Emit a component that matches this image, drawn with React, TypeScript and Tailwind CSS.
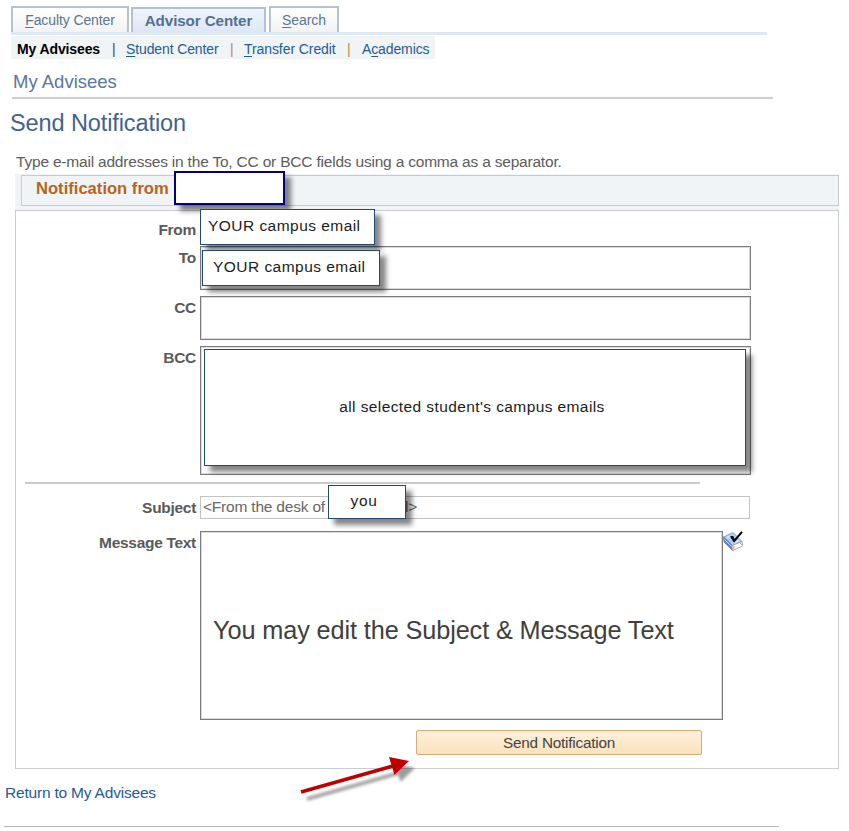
import type { ReactNode } from "react"
import clsx from "clsx"

function Callout({ className, children }: { className?: string; children?: ReactNode }) {
  return (
    <div
      className={clsx(
        "absolute z-10 flex items-center whitespace-nowrap bg-white text-[15.5px] text-[#1c1c1c] shadow-[6px_6px_5px_rgba(0,0,0,0.48)]",
        className
      )}
    >
      {children}
    </div>
  )
}

function FieldRow({ label, className, children }: { label: string; className?: string; children?: ReactNode }) {
  return (
    <div className={clsx("relative flex items-start", className)}>
      <div className="mr-1 w-[180px] shrink-0 pt-[3px] text-right text-[15.5px] leading-[18px] font-bold tracking-[-0.3px] text-[#5a5a5a]">
        {label}
      </div>
      {children}
    </div>
  )
}

function TextArea({ className, children }: { className?: string; children?: ReactNode }) {
  return (
    <div className={clsx("border border-[#7b7b7b] shadow-[inset_0_0_0_1px_#dcdcdc]", className)}>
      {children}
    </div>
  )
}

function Key({ children }: { children: ReactNode }) {
  return <span className="underline underline-offset-2">{children}</span>
}

function SpellCheckIcon() {
  return (
    <svg className="h-[21px] w-[21px] shrink-0" viewBox="0 0 21 21">
      <path d="M0.5 6 L10 1.5 L19 10.500 L9.500 14.500 Z" fill="#a4d0f5" stroke="#7d93a8" strokeWidth="0.8" />
      <path d="M4 7 L7 5 M11 12 L16 9.500" stroke="#d6ecfc" strokeWidth="1.4" />
      <path d="M0.500 6 L9.500 14.500 V19.500 L1 11 Z" fill="#5f84c8" stroke="#74808f" strokeWidth="0.8" />
      <path d="M1.500 8.500 L9 15.800" stroke="#e6eefc" strokeWidth="0.8" />
      <path d="M9.500 14.500 L19 10.500 L19.500 15 L10 19.500 Z" fill="#fff" stroke="#9a9a9a" strokeWidth="0.8" />
      <path d="M9 15 L11.500 14.200 V18.300 L9.500 19.500 Z" fill="#f3b5b0" />
      <path d="M17 12 L20 14.500" stroke="#8aa9cf" strokeWidth="1" />
      <path d="M8.500 5.500 L11.200 10 L19 0.800" fill="none" stroke="#000" strokeWidth="2" />
      <path d="M7 5 H10.200 L11.800 8.500 L10.500 10.800 Z" fill="#000" />
    </svg>
  )
}

function Arrow() {
  return (
    <svg className="absolute top-[576px] left-[281px] z-10 h-[60px] w-[130px]" viewBox="0 0 130 60">
      <defs>
        <filter id="arrow-blur" x="-20%" y="-20%" width="140%" height="140%">
          <feGaussianBlur stdDeviation="1.7" />
        </filter>
      </defs>
      <g transform="translate(6 7)" opacity="0.38" filter="url(#arrow-blur)">
        <path d="M5 42 L97 16" stroke="#000" strokeWidth="3.6" />
        <path d="M93 7 L113 11 L98.500 25 Z" fill="#000" />
      </g>
      <path d="M5 42 L97 16" stroke="#c00000" strokeWidth="3.6" />
      <path d="M93 7 L113 11 L98.500 25 Z" fill="#c00000" />
    </svg>
  )
}

export default function App() {
  return (
    <div className="h-[831px] w-[849px] overflow-hidden bg-white pt-[6px] font-['Liberation_Sans',Arial,sans-serif]">
      <div className="ml-[11px] flex h-[29px] w-[756px] items-end border-b-[3px] border-[#dce8f4] text-[14px] tracking-[-0.1px] text-[#5a7595]">
        <div className="mr-[2px] flex h-[26px] w-[118px] items-center justify-center border-2 border-b-0 border-[#b8c1d0] bg-linear-to-b from-white to-[#f3f3f3]">
          <span><Key>F</Key>aculty Center</span>
        </div>
        <div className="mr-[3px] flex h-[25px] w-[135px] items-center justify-center border-2 border-b-0 border-[#b3c1d8] bg-linear-to-b from-[#f0f5fc] to-[#dce7f5] pt-[2px] text-[15.2px] font-bold text-[#54708f]">
          Advisor Center
        </div>
        <div className="flex h-[26px] w-[70px] items-center justify-center border-2 border-b-0 border-[#b8c1d0] bg-linear-to-b from-white to-[#f3f3f3]">
          <span><Key>S</Key>earch</span>
        </div>
      </div>

      <div className="mt-px ml-[11px] flex h-[23px] w-[424px] items-center bg-[#f0f4f5] pt-[3px] pl-[6px] text-[14px] tracking-[-0.12px] whitespace-nowrap text-[#1f5a9c]">
        <span className="w-[95px] font-bold text-black">My Advisees</span>
        <span className="w-[14px] text-[#44446a]">|</span>
        <span className="w-[104px]"><Key>S</Key>tudent Center</span>
        <span className="w-[14px] text-[#c08a4a]">|</span>
        <span className="w-[103px] tracking-[-0.08px]"><Key>T</Key>ransfer Credit</span>
        <span className="w-[15px] text-[#c08a4a]">|</span>
        <span>A<Key>c</Key>ademics</span>
      </div>

      <div className="ml-[12px] h-[40px] w-[761px] border-b-2 border-[#cfcfcf] pt-[12px] pl-px text-[18.5px] leading-[22px] text-[#5a77a0]">
        My Advisees
      </div>
      <h1 className="mt-[10px] ml-[10px] h-[28px] text-[23.5px] leading-[28px] tracking-[-0.1px] text-[#42618f]">
        Send Notification
      </h1>
      <p className="mt-[15px] ml-[16px] h-[22px] text-[15.5px] leading-[20px] tracking-[-0.2px] whitespace-nowrap text-[#5c5c5c]">
        Type e-mail addresses in the To, CC or BCC fields using a comma as a separator.
      </p>

      <div className="relative ml-[15px] w-[824px]">
        <div className="h-[36px] bg-[#f0f4f6] pt-px pl-[6px]">
          <div className="h-[31px] border border-[#c6cad3] pl-[14px] text-[16.6px] leading-[25px] font-bold text-[#b5651d]">
            Notification from
          </div>
        </div>
        <Callout className="top-[-3px] left-[159px] h-[34px] w-[111px] border-2 border-[#000080]" />

        <div className="h-[559px] border border-[#c9ccd5]">
          <FieldRow label="From" className="h-[35px] pt-[7px]">
            <Callout className="top-[-2px] left-[184px] h-[36px] w-[175px] border border-[#1f497d] pb-[2px] pl-[7px] tracking-[0.46px]">
              YOUR campus email
            </Callout>
          </FieldRow>
          <FieldRow label="To" className="h-[50px]">
            <TextArea className="h-[44px] w-[551px]" />
            <Callout className="top-[4px] left-[186px] h-[36px] w-[178px] border border-[#1f497d] pb-[2px] pl-[10px] tracking-[0.46px]">
              YOUR campus email
            </Callout>
          </FieldRow>
          <FieldRow label="CC" className="h-[50px]">
            <TextArea className="h-[44px] w-[551px]" />
          </FieldRow>
          <FieldRow label="BCC" className="h-[129px]">
            <TextArea className="h-[129px] w-[551px]" />
            <Callout className="top-[3px] left-[188px] h-[117px] w-[542px] justify-center border border-[#1f497d] pr-[6px] pb-[2px] tracking-[0.4px]">
              all selected student's campus emails
            </Callout>
          </FieldRow>
          <div className="mt-[7px] ml-[9px] h-[2px] w-[675px] bg-[#cbcbcb]" />
          <FieldRow label="Subject" className="mt-[12px] h-[35px]">
            <div className="flex h-[23px] w-[550px] items-center border border-[#c3c3c3] pb-[2px] pl-[2px] text-[15.5px] tracking-[-0.2px] whitespace-pre text-[#666]">
              <span className="w-[202px]">{"<From the desk of"}</span>
              <span>{"l>"}</span>
            </div>
            <Callout className="top-[-11px] left-[312px] h-[34px] w-[78px] justify-center border border-[#1f497d] pr-[6px] pb-[3px] tracking-[0.7px]">
              you
            </Callout>
          </FieldRow>
          <FieldRow label="Message Text" className="h-[189px]">
            <TextArea className="flex h-[189px] w-[523px] items-center pt-[10px] pl-[12px] text-[25.3px] tracking-[-0.12px] whitespace-nowrap text-[#404040]">
              You may edit the Subject &amp; Message Text
            </TextArea>
            <SpellCheckIcon />
          </FieldRow>
          <button className="mt-[10px] ml-[400px] block h-[25px] w-[286px] rounded-[2px] border border-[#dba878] bg-linear-to-b from-[#fdf0dc] to-[#fae3bb] text-[15.3px] leading-[21px] tracking-[-0.22px] text-[#444]">
            Send Notification
          </button>
        </div>
        <Arrow />
      </div>

      <a href="#" className="mt-[14px] ml-[5px] block h-[43px] text-[15.5px] leading-[20px] tracking-[-0.2px] text-[#1f5a9c]">
        Return to My Advisees
      </a>
      <div className="ml-[4px] h-px w-[775px] bg-[#b5b5b5]" />
    </div>
  )
}
